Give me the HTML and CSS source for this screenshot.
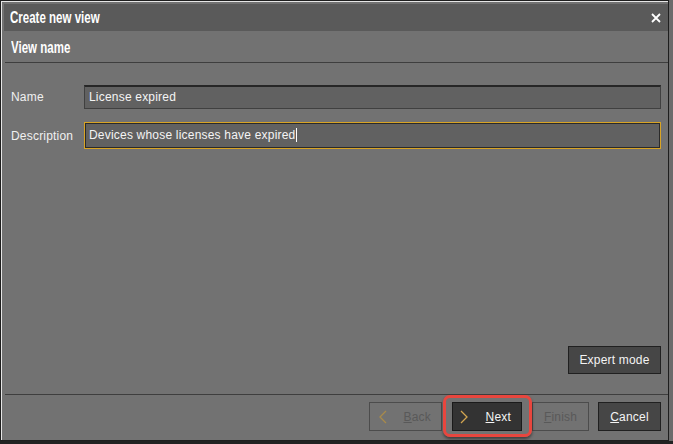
FILE: index.html
```html
<!DOCTYPE html>
<html lang="en">
<head>
    <meta charset="UTF-8">
    <title>Create new view</title>
    <link rel="stylesheet" href="styles.css">
</head>

<body>
    <div class="dialog">
        <div class="titlebar">
            <span class="title">Create new view</span>
            <svg class="close" width="10" height="10" viewBox="0 0 10 10"><path d="M1 1 L9 9 M9 1 L1 9" stroke="#ffffff" stroke-width="1.8"/></svg>
        </div>

        <div class="page-head"><span class="title">View name</span></div>

        <div class="page-body">
            <div class="form">
                <div class="row">
                    <label class="label">Name</label>
                    <div class="field">License expired</div>
                </div>
                <div class="row">
                    <label class="label">Description</label>
                    <div class="field focused"><span class="caret">Devices whose licenses have expired</span></div>
                </div>
            </div>
            <div class="expert">
                <button class="btn">Expert mode</button>
            </div>
        </div>

        <div class="footer">
            <button class="btn disabled back">
                <svg class="chev" width="8" height="14" viewBox="0 0 8 14"><path d="M7 1 L1 7 L7 13" fill="none" stroke="#a88a4a" stroke-width="1.3"/></svg>
                <span><u>B</u>ack</span>
            </button>
            <div class="mark">
                <button class="btn primary next">
                    <svg class="chev" width="8" height="14" viewBox="0 0 8 14"><path d="M1 1 L7 7 L1 13" fill="none" stroke="#d2a550" stroke-width="1.3"/></svg>
                    <span><u>N</u>ext</span>
                </button>
            </div>
            <button class="btn disabled finish"><u>F</u>inish</button>
            <button class="btn cancel"><u>C</u>ancel</button>
        </div>
    </div>
</body>
</html>
```

FILE: styles.css
```css
html, body {
    margin: 0;
    padding: 0;
    background-color: #222222;
    font-family: "Liberation Sans", Arial, sans-serif;
    font-size: 12px;
    color: #f2f2f2;
}

.dialog {
    width: 669px;
    height: 441px;
    box-sizing: border-box;
    background-color: #727272;
    border: 1px solid #1e1e1e;
    box-shadow: inset 1px 1px 0 #e6e6e6, 4px 0 0 #6b6b6b;
    padding: 3px 0 0 3px;
    display: flex;
    flex-direction: column;
}

.titlebar {
    height: 27px;
    background-color: #5a5a5a;
    display: flex;
    align-items: center;
    justify-content: space-between;
    padding: 0 7px 0 6px;
    flex-shrink: 0;
}

/* condensed bold heading, the narrow face isn't installed */
.title {
    display: inline-block;
    font-weight: bold;
    font-size: 16px;
    color: #ffffff;
    transform: scaleX(0.72);
    transform-origin: left center;
    white-space: nowrap;
}

.page-head {
    height: 32px;
    line-height: 34px;
    padding-left: 6px;
    margin-left: 1px;
    border-bottom: 1px solid #3e3e3e;
    box-sizing: border-box;
    flex-shrink: 0;
}

.page-body {
    flex: 1;
    display: flex;
    flex-direction: column;
    justify-content: space-between;
    padding: 22px 7px 20px 6px;
    border-bottom: 1px solid #3e3e3e;
    margin-left: 1px;
}

.form {
    display: flex;
    flex-direction: column;
    gap: 13px;
}

.row {
    display: flex;
    align-items: center;
}

.label {
    width: 73px;
    color: #f0f0f0;
    letter-spacing: 0.2px;
}

.field {
    flex: 1;
    height: 24px;
    box-sizing: border-box;
    background-color: #616161;
    border: 1px solid #404040;
    border-top: 2px solid #262626;
    padding-left: 4px;
    line-height: 21px;
    color: #f4f4f4;
    letter-spacing: 0.2px;
}

.field.focused {
    height: 27px;
    border: 1px solid #d9a424;
    box-shadow: inset 0 0 0 1px #2a2a2a;
    line-height: 25px;
}

.caret {
    border-right: 1px solid #ffffff;
    padding-right: 1px;
}

.expert {
    display: flex;
    justify-content: flex-end;
}

.btn {
    height: 29px;
    box-sizing: border-box;
    background-color: #464646;
    border: 1px solid #202020;
    color: #f4f4f4;
    font-family: "Liberation Sans", Arial, sans-serif;
    font-size: 12px;
    letter-spacing: 0.2px;
    white-space: nowrap;
    padding: 0 11px;
    display: flex;
    align-items: center;
}

.expert .btn {
    width: 93px;
    height: 28px;
    padding: 0;
    justify-content: center;
}

.footer {
    height: 45px;
    display: flex;
    justify-content: flex-end;
    align-items: flex-start;
    padding: 7px 7px 0 0;
    gap: 10px;
    box-sizing: border-box;
}

.btn.disabled {
    background-color: transparent;
    border-color: #4c4c4c;
    color: #595959;
}

.btn.primary {
    background-color: #333333;
    border-color: #1a1a1a;
}

.back, .next {
    justify-content: space-between;
}

.back {
    width: 73px;
    padding: 0 10px 0 9px;
}

.next {
    width: 70px;
    padding: 0 10px 0 7px;
}

.finish {
    width: 57px;
    justify-content: center;
}

.cancel {
    width: 63px;
    justify-content: center;
    margin-left: -1px;
}

.mark {
    position: relative;
}

/* highlight ring drawn over the Next button */
.mark::after {
    content: "";
    position: absolute;
    top: -7px;
    left: -9px;
    right: -10px;
    bottom: -6px;
    border: 3px solid #e8463e;
    border-radius: 7px;
    box-shadow: 0 2px 3px rgba(0, 0, 0, 0.45);
    pointer-events: none;
}
```
